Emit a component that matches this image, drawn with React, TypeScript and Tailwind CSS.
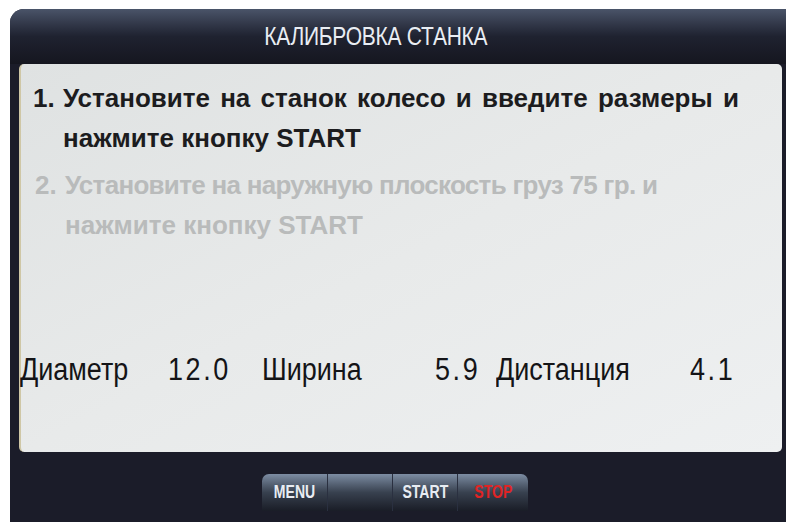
import type { ReactNode } from 'react'

// Calibration screen of the wheel balancer
const params = [
  { label: 'Диаметр', value: '12.0', labelW: 'w-[148px]', valueW: 'w-[94px]' },
  { label: 'Ширина', value: '5.9', labelW: 'w-[173px]', valueW: 'w-[61px]' },
  { label: 'Дистанция', value: '4.1', labelW: 'w-[194px]', valueW: 'w-[50px]' },
]

export default function App() {
  return (
    <div className="w-[786px] h-[522px] bg-white pl-[10px] pt-[9px] overflow-hidden">
      <div className="h-full flex flex-col rounded-tl-[14px] bg-[#1b1c29] overflow-hidden">
        {/* Title bar */}
        <div className="h-[55px] shrink-0 flex items-center justify-center bg-gradient-to-b from-[#4a5469] via-[#1f2230] to-[#15161f]">
          <h1 className="mr-[44px] text-[25px] text-[#e9edf3] tracking-[-0.3px] font-['Liberation_Sans',sans-serif] scale-x-[0.84]">
            КАЛИБРОВКА СТАНКА
          </h1>
        </div>

        {/* Instruction panel */}
        <div className="h-[388px] shrink-0 ml-[9px] mr-[4px] rounded-[5px] border-l-2 border-[#cfc7a6] bg-gradient-to-br from-[#dfe2e2] via-[#e8eaea] to-[#eef0f1] pl-[12px] pt-[14px] flex flex-col font-['Liberation_Sans',Arial,sans-serif]">
          <Step n="1." tone="text-[#1c1c1e]" lead="[word-spacing:3px]">
            Установите на станок колесо и введите размеры и
          </Step>
          <Step n="2." tone="text-[#b9bbbb]" lead="tracking-[-0.7px]" className="mt-[7px] pl-[2px]">
            Установите на наружную плоскость груз 75 гр. и
          </Step>

          <div className="mt-[107px] h-[36px] flex items-center text-[31px] text-[#141417] -ml-[13px]">
            {params.map((p) => (
              <div key={p.label} className="flex items-center">
                <span className={p.labelW}>
                  <span className="inline-block origin-left scale-x-[0.87]">{p.label}</span>
                </span>
                <span className={p.valueW}>
                  <span className="inline-block origin-left scale-x-[0.87] tracking-[3px]">{p.value}</span>
                </span>
              </div>
            ))}
          </div>
        </div>

        {/* Soft keys */}
        <div className="flex-1 flex justify-center pt-[22px]">
          <div className="flex h-[37px] ml-[-6px] rounded-t-[7px] overflow-hidden">
            <SoftKey label="MENU" />
            <SoftKey label="" />
            <SoftKey label="START" />
            <SoftKey label="STOP" red wide />
          </div>
        </div>
      </div>
    </div>
  )
}

function Step({
  n,
  tone,
  lead,
  className = '',
  children,
}: {
  n: string
  tone: string
  lead: string
  className?: string
  children: ReactNode
}) {
  return (
    <div className={`${tone} ${className} font-bold text-[26px] leading-[40px]`}>
      <div className="flex">
        <span className="w-[30px]">{n}</span>
        <span className={`whitespace-nowrap ${lead}`}>{children}</span>
      </div>
      <div className="pl-[30px]">нажмите кнопку START</div>
    </div>
  )
}

function SoftKey({ label, red = false, wide = false }: { label: string; red?: boolean; wide?: boolean }) {
  return (
    <div
      className={`${wide ? 'w-[71px]' : 'w-[65px]'} flex items-center justify-center border-l border-[#2a3040] first:border-l-0 bg-gradient-to-b from-[#7d8da3] via-[#38414f] to-[#1a1d27]`}
    >
      <span
        className={`text-[18px] font-bold scale-x-[0.78] font-['Liberation_Sans',sans-serif] ${
          red ? 'text-[#e02424]' : 'text-[#e8ecf2]'
        }`}
      >
        {label}
      </span>
    </div>
  )
}
